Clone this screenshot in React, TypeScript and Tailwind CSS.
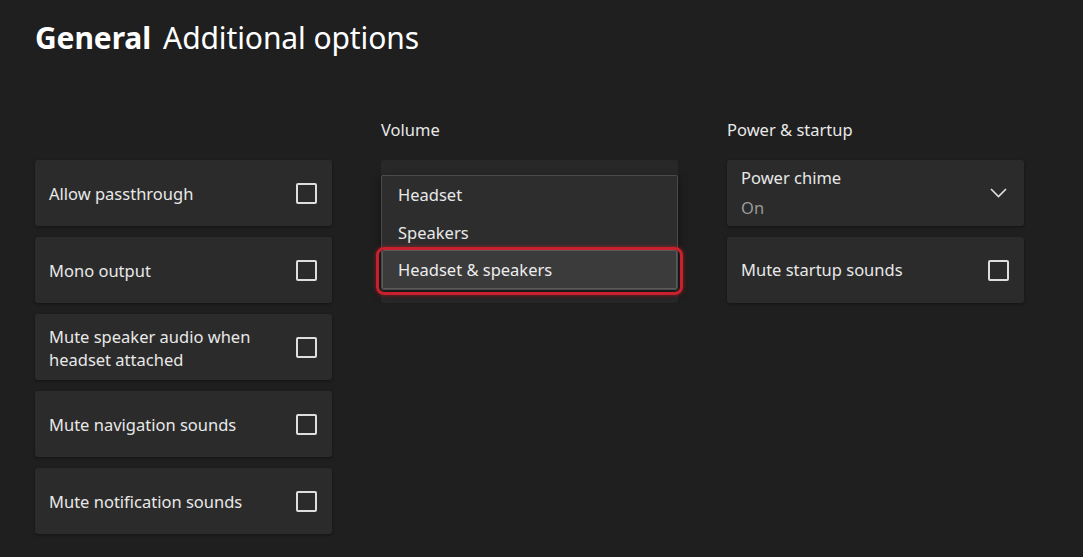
import React from "react";

const font = { fontFamily: '"Noto Sans", "Open Sans", sans-serif' };

function Checkbox() {
  return <div className="w-[21px] h-[21px] shrink-0 rounded-[2px] border-2 border-[#dedede]" />;
}

function CheckCard({ label }: { label: string }) {
  return (
    <div className="h-[66px] rounded-[3px] bg-[#2b2b2b] pl-[14px] pr-[15px] flex items-center justify-between shadow-[0_1px_3px_rgba(0,0,0,0.4)]">
      <span className="text-[16.5px] leading-[23px] text-[#e8e8e8] w-[230px] pt-[1px]">{label}</span>
      <Checkbox />
    </div>
  );
}

function Label({ text }: { text: string }) {
  return (
    <div className="h-[30px] mb-[15px] flex items-center text-[16.5px] text-[#e8e8e8]">{text}</div>
  );
}

export default function App() {
  return (
    <div className="w-full h-[557px] bg-[#1f1f1f] overflow-hidden px-[35px]" style={font}>
      <div className="pt-[16px] h-[115px] text-[30px] leading-[44px] text-white tracking-[-0.1px]">
        <span className="font-bold">General</span>
        <span className="ml-[12px]">Additional options</span>
      </div>
      <div className="flex gap-[49px]">
        <div className="w-[297px] flex flex-col">
          <Label text="" />
          <div className="flex flex-col gap-[11px]">
            <CheckCard label="Allow passthrough" />
            <CheckCard label="Mono output" />
            <CheckCard label="Mute speaker audio when headset attached" />
            <CheckCard label="Mute navigation sounds" />
            <CheckCard label="Mute notification sounds" />
          </div>
        </div>
        <div className="w-[297px] flex flex-col">
          <Label text="Volume" />
          <div className="relative h-[143px] rounded-[3px] bg-[#282828]">
            <div className="absolute left-0 right-0 top-[15px] bg-[#2d2d2d] border border-[#4a4a4a] rounded-[2px] shadow-[0_4px_10px_rgba(0,0,0,0.5)]">
              <div className="h-[38px] pl-[16px] flex items-center text-[16.5px] text-[#e8e8e8] pt-[1px]">Headset</div>
              <div className="h-[36px] pl-[16px] flex items-center text-[16.5px] text-[#e8e8e8] pt-[2px]">Speakers</div>
              <div className="relative h-[39px] bg-[#3b3b3b] border border-[#5a5a5a] rounded-[2px] pl-[15px] flex items-center text-[16.5px] text-[#ededed] pt-[1px]">
                Headset &amp; speakers
                <div className="absolute -left-[7px] -right-[7px] -top-[4px] -bottom-[7px] rounded-[8px] border-[3px] border-[#c8202c] shadow-[0_0_4px_rgba(220,30,40,0.6)]" />
              </div>
            </div>
          </div>
        </div>
        <div className="w-[297px] flex flex-col">
          <Label text="Power & startup" />
          <div className="flex flex-col gap-[11px]">
            <div className="h-[66px] rounded-[3px] bg-[#2b2b2b] pl-[14px] pr-[17px] flex items-center justify-between shadow-[0_1px_3px_rgba(0,0,0,0.4)]">
              <div className="flex flex-col">
                <span className="text-[16.5px] leading-[30px] text-[#e8e8e8]">Power chime</span>
                <span className="text-[16.5px] leading-[30px] text-[#9a9a9a]">On</span>
              </div>
              <svg width="17" height="10" viewBox="0 0 17 10" fill="none">
                <path d="M1 1 L8.5 8.5 L16 1" stroke="#e0e0e0" strokeWidth="1.6" />
              </svg>
            </div>
            <div className="h-[66px] rounded-[3px] bg-[#2b2b2b] pl-[14px] pr-[15px] flex items-center justify-between shadow-[0_1px_3px_rgba(0,0,0,0.4)]">
              <span className="text-[16.5px] text-[#e8e8e8] pt-[1px]">Mute startup sounds</span>
              <Checkbox />
            </div>
          </div>
        </div>
      </div>
    </div>
  );
}
